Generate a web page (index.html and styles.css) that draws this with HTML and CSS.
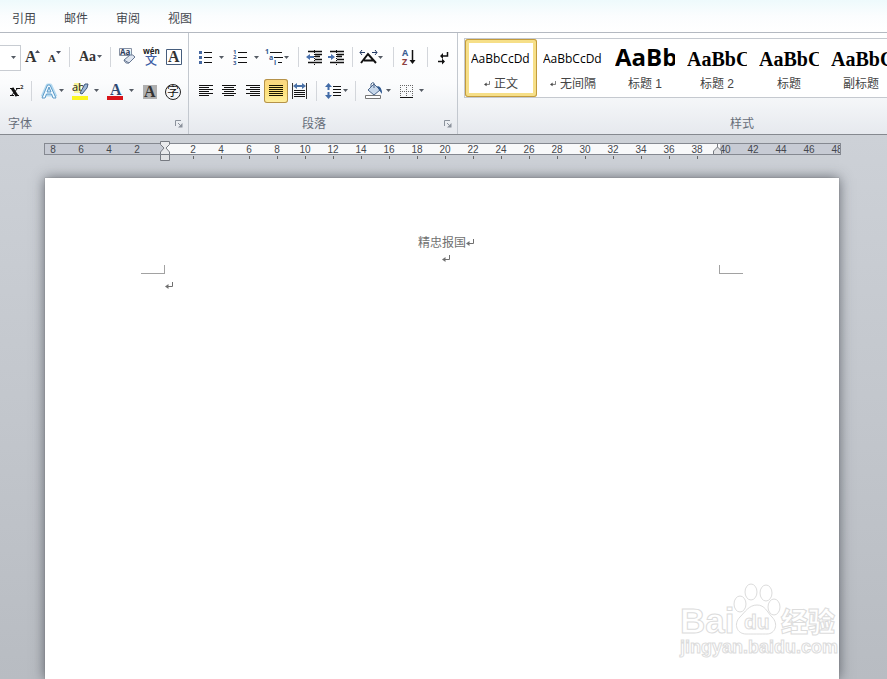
FILE: index.html
```html
<!DOCTYPE html>
<html lang="zh-CN">
<head>
<meta charset="utf-8">
<title>精忠报国</title>
<link rel="stylesheet" href="styles.css">
</head>
<body>
<svg class="defs" aria-hidden="true">
  <symbol id="drop" viewBox="0 0 5 3"><path d="M0 0h5L2.500 3z" fill="#555b64"/></symbol>
  <symbol id="ret" viewBox="0 0 8 8"><path d="M7.500 0v4.500H2" fill="none" stroke="currentColor"/><path d="M0 4.500L3.500 2v5z" fill="currentColor"/></symbol>
  <symbol id="launch" viewBox="0 0 8 8"><path d="M.5 6V.5H6M3 3l3 3" fill="none" stroke="#8b929c"/><path d="M7.500 3v4.500H3z" fill="#8b929c"/></symbol>
</svg>

<nav class="tabs">
  <a href="#ref">引用</a>
  <a href="#mail">邮件</a>
  <a href="#review">审阅</a>
  <a href="#view">视图</a>
</nav>

<div class="ribbon">
  <section class="group font-group">
    <div class="tools">
      <span class="combo"><select aria-label="字号"><option></option></select><svg width="5" height="3"><use href="#drop"/></svg></span>
      <button class="w22" aria-label="增大字体"><svg viewBox="0 0 22 24"><text class="serif" x="4" y="17" font-size="16">A</text><path d="M14 8h5L16.500 5z" fill="#444b5e"/></svg></button>
      <button class="w22" aria-label="缩小字体"><svg viewBox="0 0 22 24"><text class="serif" x="5" y="17" font-size="11">A</text><path d="M13 6h5L15.500 9z" fill="#444b5e"/></svg></button>
      <i class="sep"></i>
      <button class="w32" aria-label="更改大小写"><svg viewBox="0 0 32 24"><text class="serif" x="5" y="16" font-size="14">Aa</text><use href="#drop" x="23" y="10" width="5" height="3"/></svg></button>
      <i class="sep"></i>
      <button class="w24" aria-label="清除格式"><svg viewBox="0 0 24 24"><path d="M4.500 3.500h12v7h-12z" fill="#f3f5f8" stroke="#8792a5"/><text class="sans" x="5" y="10" font-size="8" fill="#2c3c5c">Aa</text><path d="M9 15l6-5q3-1 5 2l-6 6q-4 1-5-3z" fill="#dfe6f1" stroke="#667791"/><path d="M9 15l5 3" stroke="#667791"/></svg></button>
      <button class="w24" aria-label="拼音指南"><svg viewBox="0 0 24 24"><text class="sans" x="4" y="9" font-size="8" fill="#222">wén</text><text class="cjk" x="6" y="20" font-size="12" font-weight="500" fill="#3f5fa6">文</text></svg></button>
      <button class="w24" aria-label="字符边框"><svg viewBox="0 0 24 24"><path d="M3.500 4.500h15v15h-15z" fill="#fff" stroke="#465d7d"/><text class="serif" x="5" y="17" font-size="16">A</text></svg></button>
    </div>
    <div class="tools">
      <button class="w27" aria-label="上标"><svg viewBox="0 0 27 24"><path d="M12 9l5 8" stroke="#111" stroke-width="3"/><path d="M18 9l-7 8M10 9.500h4m2 0h4M10 16.500h4m1 0h4" fill="none" stroke="#111"/><text class="sans" x="20" y="10" font-size="6" fill="#333">2</text></svg></button>
      <i class="sep"></i>
      <button class="w30" aria-label="文本效果"><svg viewBox="0 0 30 24"><path d="M7 18L12 7h2l5 11M9 15h8" fill="none" stroke="#b5daf0" stroke-width="5" stroke-linejoin="round"/><path d="M6 19L11.500 6h2.500L20 19h-3l-1.500-4h-5L9 19zM11 13h4l-2-5z" fill="#f4fbff" stroke="#5c9ac8"/><use href="#drop" x="23" y="10" width="5" height="3"/></svg></button>
      <button class="w36" aria-label="突出显示"><svg viewBox="0 0 36 24"><path d="M6 17h16v4H6z" fill="#fbf520"/><path d="M8 4h7v10H8z" fill="#f8f49a"/><text class="light" x="6" y="12" font-size="11" fill="#222">ab</text><path d="M14 14l5-9h3l-1 4-5 6z" fill="#9eb7d7" stroke="#405a7c"/><use href="#drop" x="28" y="10" width="5" height="3"/></svg></button>
      <button class="w36" aria-label="字体颜色"><svg viewBox="0 0 36 24"><text class="serif" x="8" y="16" font-size="16" fill="#2f4a72">A</text><path d="M5 17h16v4H5z" fill="#d81319"/><use href="#drop" x="27" y="10" width="5" height="3"/></svg></button>
      <button class="w24" aria-label="字符底纹"><svg viewBox="0 0 24 24"><path d="M5 6h14v14H5z" fill="#b0b0b0"/><text class="serif" x="6" y="18" font-size="16">A</text></svg></button>
      <button class="w24" aria-label="带圈字符"><svg viewBox="0 0 24 24"><circle cx="11" cy="13" r="7.500" fill="none" stroke="#222"/><text class="cjk" x="5" y="17" font-size="12" fill="#111">字</text></svg></button>
    </div>
    <div class="caption"><span>字体</span><button aria-label="字体设置"><svg width="8" height="8"><use href="#launch"/></svg></button></div>
  </section>

  <section class="group para-group">
    <div class="tools">
      <button class="w34" aria-label="项目符号"><svg viewBox="0 0 34 24"><path d="M5 6h3v3H5zm0 5h3v3H5zm0 5h3v3H5z" fill="#4668a0"/><path d="M10 7.500h8m-8 5h8m-8 5h8" stroke="#111"/><use href="#drop" x="25" y="11" width="5" height="3"/></svg></button>
      <button class="w34" aria-label="编号"><svg viewBox="0 0 34 24"><g class="sans" font-size="6" fill="#35578f"><text x="5" y="9">1</text><text x="5" y="14">2</text><text x="5" y="20">3</text></g><path d="M10 7.500h9m-9 5h9m-9 5h9" stroke="#111"/><use href="#drop" x="26" y="11" width="5" height="3"/></svg></button>
      <button class="w32" aria-label="多级列表"><svg viewBox="0 0 32 24"><g class="sans" font-size="7" fill="#35578f"><text x="3" y="9">1</text><text x="7" y="15">a</text><text x="12" y="20">i</text></g><path d="M8 7.500h12m-8 5h9m-5 5h4" stroke="#111"/><use href="#drop" x="22" y="11" width="5" height="3"/></svg></button>
      <i class="sep"></i>
      <button class="w24" aria-label="减少缩进量"><svg viewBox="0 0 24 24"><path d="M5 6.500h14M12 9.500h7M12 11.500h5M12 14.500h7M5 17.500h14" stroke="#111" stroke-width="1.500"/><path d="M11.500 5v15" stroke="#111" stroke-dasharray="1 1"/><path d="M3 12l4-3v2h4v2H7v2z" fill="#4971ae"/></svg></button>
      <button class="w22" aria-label="增加缩进量"><svg viewBox="0 0 22 24"><path d="M3 6.500h14M10 9.500h7M10 11.500h5M10 14.500h7M3 17.500h14" stroke="#111" stroke-width="1.500"/><path d="M9.500 5v15" stroke="#111" stroke-dasharray="1 1"/><path d="M8 12L4 9v2H1v2h3v2z" fill="#4971ae"/></svg></button>
      <i class="sep tight"></i>
      <button class="w34" aria-label="中文版式"><svg viewBox="0 0 34 24"><path d="M5 18l7-9 8 9M8 15.500h9" fill="none" stroke="#111" stroke-width="2"/><path d="M4 7.500h5m7 0h5M6 5L4 7.500 6 10m13-5l2 2.500-2 2.500" fill="none" stroke="#243a63"/><use href="#drop" x="22" y="11" width="5" height="3"/></svg></button>
      <i class="sep tight"></i>
      <button class="w27" aria-label="排序"><svg viewBox="0 0 27 24"><g class="sans" font-size="9"><text x="5" y="11" fill="#3b5f92">A</text><text x="5" y="20" fill="#8e4241">Z</text></g><path d="M15.500 5v12" stroke="#111" stroke-width="1.500"/><path d="M12.500 15h6l-3 4z" fill="#111"/></svg></button>
      <i class="sep tight"></i>
      <button class="w24" aria-label="显示编辑标记"><svg viewBox="0 0 24 24"><path d="M16.500 7v4H11M7 16.500h6" fill="none" stroke="#111" stroke-width="1.500"/><path d="M9 11l3-3v6zM11 13.500l3 3-3 3z" fill="#111"/></svg></button>
    </div>
    <div class="tools">
      <button class="w24" aria-label="左对齐"><svg viewBox="0 0 24 24"><path d="M5 6.500h14M5 8.500h10M5 10.500h14M5 12.500h10M5 14.500h14M5 16.500h10" stroke="#111"/></svg></button>
      <button class="w24" aria-label="居中"><svg viewBox="0 0 24 24"><path d="M4 6.500h14M6 8.500h10M4 10.500h14M6 12.500h10M4 14.500h14M6 16.500h10" stroke="#111"/></svg></button>
      <button class="w22" aria-label="右对齐"><svg viewBox="0 0 22 24"><path d="M4 6.500h14M8 8.500h10M4 10.500h14M8 12.500h10M4 14.500h14M8 16.500h10" stroke="#111"/></svg></button>
      <button class="w24 pressed" aria-label="两端对齐" aria-pressed="true"><svg viewBox="0 0 24 24"><path d="M5 6.500h14M5 8.500h14M5 10.500h14M5 12.500h14M5 14.500h14M5 16.500h14" stroke="#1a1500"/></svg></button>
      <button class="w24" aria-label="分散对齐"><svg viewBox="0 0 24 24"><path d="M4.500 4v16m14-16v16" stroke="#333"/><path d="M6 11.500h11M6 13.500h11M6 15.500h11M6 17.500h11" stroke="#111"/><path d="M5 7l4-3v2h5V4l4 3-4 3V8H9v2z" fill="#4a72a8"/></svg></button>
      <i class="sep"></i>
      <button class="w30" aria-label="行距"><svg viewBox="0 0 30 24"><path d="M7.500 6v13" stroke="#416ba7" stroke-width="2" stroke-dasharray="5 2"/><path d="M4 8l3.500-4L11 8zm0 8l3.500 4 3.500-4z" fill="#416ba7"/><path d="M12 7.500h8m-8 3h8m-8 3h8m-8 3h8" stroke="#111"/><use href="#drop" x="22" y="10" width="5" height="3"/></svg></button>
      <i class="sep"></i>
      <button class="w34" aria-label="底纹"><svg viewBox="0 0 34 24"><path d="M8 11l6-6 6 6-6 5z" fill="#c7d7ea" stroke="#4c678b"/><path d="M14 9V4q-2-1-3 1v3" fill="none" stroke="#4c678b"/><path d="M17 7q5 0 5 8l-3-4z" fill="#315a91"/><path d="M5.500 16.500h15v3h-15z" fill="#fff" stroke="#777"/><use href="#drop" x="26" y="10" width="5" height="3"/></svg></button>
      <button class="w34" aria-label="边框"><svg viewBox="0 0 34 24"><path d="M6 6.500h13M6 12.500h13M6.500 6v12M12.500 6v12M18.500 6v12" fill="none" stroke="#666" stroke-dasharray="1 1"/><path d="M6 18.500h13" stroke="#111"/><use href="#drop" x="25" y="10" width="5" height="3"/></svg></button>
    </div>
    <div class="caption"><span>段落</span><button aria-label="段落设置"><svg width="8" height="8"><use href="#launch"/></svg></button></div>
  </section>

  <section class="group style-group">
    <div class="gallery">
      <button class="style selected"><span class="sample">AaBbCcDd</span><span class="name"><svg width="6" height="6"><use href="#ret"/></svg>正文</span></button>
      <button class="style"><span class="sample">AaBbCcDd</span><span class="name"><svg width="6" height="6"><use href="#ret"/></svg>无间隔</span></button>
      <button class="style"><span class="sample large">AaBb</span><span class="name">标题 1</span></button>
      <button class="style"><span class="sample roman">AaBbC</span><span class="name">标题 2</span></button>
      <button class="style"><span class="sample roman">AaBbC</span><span class="name">标题</span></button>
      <button class="style"><span class="sample roman">AaBbC</span><span class="name">副标题</span></button>
    </div>
    <div class="caption"><span>样式</span></div>
  </section>
</div>

<main class="workspace">
  <div class="ruler">
    <div class="scale">
      <span>8</span><span>6</span><span>4</span><span>2</span><span class="origin"><svg width="10" height="20" viewBox="0 0 10 20"><path d="M.5.5h9v3L6 7l3.500 4v3h-9v-3L4 7 .5 3.500z" fill="#e9eaec" stroke="#777b82"/><path d="M.5 13.500h9v6h-9z" fill="#e1e2e4" stroke="#777b82"/></svg></span>
      <span class="tick">2</span><span class="tick">4</span><span class="tick">6</span><span class="tick">8</span><span class="tick">10</span><span class="tick">12</span><span class="tick">14</span><span class="tick">16</span><span class="tick">18</span><span class="tick">20</span><span class="tick">22</span><span class="tick">24</span><span class="tick">26</span><span class="tick">28</span><span class="tick">30</span><span class="tick">32</span><span class="tick">34</span><span class="tick">36</span><span class="tick">38</span><span class="limit"><svg width="9" height="12" viewBox="0 0 9 12"><path d="M4.500 1v3l4 4v3.500h-8V8l4-4" fill="#dfe0e3" stroke="#777b82"/></svg>40</span><span>42</span><span>44</span><span>46</span><span>48</span>
    </div>
  </div>

  <article class="paper">
    <header class="page-header">
      <p>精忠报国<svg class="mark" width="8" height="8"><use href="#ret"/></svg></p>
      <p><svg class="mark" width="8" height="8"><use href="#ret"/></svg></p>
    </header>
    <div class="corners"><i class="corner"></i><i class="corner end"></i></div>
    <p class="body-line"><svg width="8" height="8"><use href="#ret"/></svg></p>
    <svg class="watermark" width="164" height="84" viewBox="0 0 164 84" role="img" aria-label="Baidu 经验">
      <g fill="#fff" stroke="#dcdcdc">
        <text class="arial" x="5" y="55" font-size="35">Bai</text>
        <ellipse cx="65" cy="26" rx="6" ry="8"/><ellipse cx="76" cy="14" rx="6" ry="8"/><ellipse cx="91" cy="15" rx="6" ry="8"/><ellipse cx="99" cy="29" rx="6" ry="8"/>
        <path d="M82 27c8 0 10 7 15 12 7 7 3 17-5 17-4 0-16 0-21 0-9 0-13-10-6-17 5-5 9-12 17-12z"/>
        <text class="arial" x="69" y="51" font-size="21">du</text>
        <text class="cjk" x="106" y="54" font-size="27" font-weight="900">经验</text>
        <text class="arial" x="5" y="75" font-size="18">jingyan.baidu.com</text>
      </g>
    </svg>
  </article>
</main>
</body>
</html>
```
FILE: styles.css
```css
* { box-sizing: border-box; }

body {
  margin: 0;
  min-height: 100vh;
  display: flex;
  flex-direction: column;
  overflow: hidden;
  background: #c5c9cf;
  color: #4a4f58;
  font: 12px/16px "Liberation Sans", "Noto Sans CJK SC", sans-serif;
}

p { margin: 0; }
button { margin: 0; padding: 0; border: 0; background: none; font: inherit; color: inherit; }
svg { display: block; overflow: visible; }
.defs { position: absolute; width: 0; height: 0; }
.serif { font-family: "Liberation Serif", serif; font-weight: 700; }
.sans { font-family: "Open Sans", sans-serif; font-weight: 700; }
.light { font-family: "Open Sans", sans-serif; }
.arial { font-family: "Liberation Sans", sans-serif; font-weight: 700; }
.cjk { font-family: "Noto Sans CJK SC", sans-serif; }

.tabs {
  display: flex;
  gap: 28px;
  height: 33px;
  padding: 11px 12px 0;
  background: linear-gradient(#eefafc, #fbfdfe 50%, #fff);
  border-bottom: 1px solid #b4b9c1;
}
.tabs a { color: #43474e; text-decoration: none; }

.ribbon {
  display: flex;
  height: 102px;
  background: linear-gradient(#fff, #fbfcfd 50%, #e6e9ee);
  border-bottom: 1px solid #85898f;
}
.group {
  flex: none;
  display: flex;
  flex-direction: column;
  gap: 10px;
  padding-top: 12px;
  border-right: 1px solid #c3c8cf;
}
.font-group { width: 189px; }
.para-group { width: 269px; padding-left: 5px; }
.style-group { flex: 1; min-width: 0; padding: 5px 0 0 6px; border: 0; gap: 15px; }

.tools { display: flex; height: 24px; }
.tools button { flex: none; height: 24px; }
.tools button svg { width: 100%; height: 24px; }
.serif { fill: #333; }
.serif[fill] { fill: #2f4a72; }
.w22 { width: 22px; }
.w24 { width: 24px; }
.w27 { width: 27px; }
.w30 { width: 30px; }
.w32 { width: 32px; }
.w34 { width: 34px; }
.w36 { width: 36px; }
.sep { flex: none; width: 1px; height: 20px; margin: 2px 4px; background: #d3d6db; }
.sep.tight { margin: 2px 3px; }
.pressed {
  border-radius: 3px;
  background: linear-gradient(#fbd682, #fde07a 50%, #fff0a0);
  box-shadow: inset 0 0 0 1px #b5924a;
}

.combo { position: relative; width: 21px; height: 26px; }
.combo select {
  width: 100%;
  height: 100%;
  border: 1px solid #c8ccd2;
  border-left: 0;
  background: #fff;
  appearance: none;
}
.combo svg { position: absolute; right: 5px; top: 11px; pointer-events: none; }

.caption { flex: none; display: flex; align-items: center; height: 22px; color: #666d79; }
.caption span { flex: 1; text-align: center; }
.caption button { width: 18px; display: flex; justify-content: center; }
.font-group .caption span { text-align: left; padding-left: 8px; }
.para-group .caption { padding-right: 5px; }
.para-group .caption span { padding-right: 10px; }
.para-group .caption button { width: 8px; }
.style-group .caption span { text-align: left; padding-left: 266px; }

.gallery {
  flex: none;
  display: flex;
  height: 60px;
  overflow: hidden;
  background: #fff;
  border: 1px solid #c5c9cf;
  border-right: 0;
}
.style {
  flex: none;
  width: 72px;
  height: 58px;
  display: flex;
  flex-direction: column;
  align-items: center;
  padding-top: 7px;
}
.selected {
  border-radius: 3px;
  box-shadow: inset 0 0 0 1px #c29b3c, inset 0 0 0 4px #f6df88;
}
.sample {
  width: 60px;
  height: 26px;
  overflow: hidden;
  white-space: nowrap;
  text-align: left;
  color: #000;
  font: 12px/26px "Open Sans", sans-serif;
}
.large { font-size: 24px; line-height: 22px; font-weight: 700; }
.roman { font: 700 20px/26px "Liberation Serif", serif; }
.name { display: flex; align-items: center; gap: 4px; height: 24px; color: #444; white-space: pre; }

.workspace {
  flex: 1;
  display: flex;
  flex-direction: column;
  padding: 8px 48px 0 44px;
  background: linear-gradient(#cdd1d7, #b8bcc2);
}
.ruler {
  flex: none;
  height: 12px;
  margin-right: -2px;
  overflow-x: clip;
  overflow-y: visible;
  border: 1px solid #858991;
  background: linear-gradient(90deg, #c7cbd4 120px, #f8f9fa 120px 675px, #c7cbd4 675px);
}
.scale { display: flex; margin-left: -6px; font: 10px/11px "Liberation Sans", sans-serif; color: #45484e; }
.scale span { position: relative; flex: none; width: 28px; text-align: center; }
.tick::after { content: ""; position: absolute; left: 14px; top: 12px; width: 1px; height: 3px; background: #666; }
.origin svg { position: absolute; left: 9px; top: -3px; }
.limit svg { position: absolute; left: 2px; top: -1px; }

.paper {
  position: relative;
  flex: 1;
  margin: 23px 0 0 1px;
  padding: 57px 96px 0;
  background: #fff;
  box-shadow: 0 0 1px #777, 0 0 12px rgba(50, 54, 62, 0.7);
  color: #707070;
}
.page-header { text-align: center; }
.page-header p { height: 16px; }
.mark { display: inline-block; margin-right: -8px; }
.corners { display: flex; justify-content: space-between; margin-top: -2px; }
.corner { width: 24px; height: 9px; border: 0 solid #a2a2a2; border-width: 0 1px 1px 0; }
.corner.end { border-width: 0 0 1px 1px; }
.body-line { padding: 8px 24px; }
.watermark { position: absolute; right: 0; bottom: 17px; }
```
